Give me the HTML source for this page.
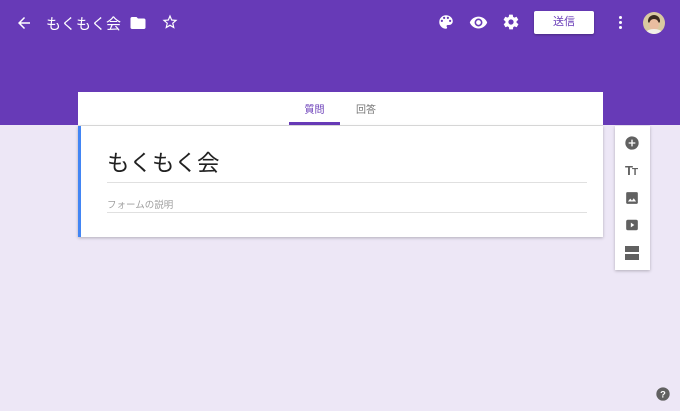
<!DOCTYPE html><html><head><meta charset="utf-8"><style>
body{margin:0;width:680px;height:411px;background:#ede7f6;font-family:"Liberation Sans","Noto Sans CJK JP",sans-serif;position:relative;overflow:hidden}
.hd{position:absolute;left:0;top:0;width:680px;height:125px;background:#673ab7}
.a{position:absolute}
</style></head><body>
<div class="hd"></div>
<svg class="a" style="left:15px;top:14px" width="18" height="18" viewBox="0 0 24 24"><path d="M20 11H7.8l5.6-5.6L12 4l-8 8 8 8 1.4-1.4L7.8 13H20z" fill="#fff"/></svg>
<div class="a" style="left:46px;top:13px;color:#fff;font-size:15px">もくもく会</div>
<svg class="a" style="left:129px;top:14px" width="18" height="18" viewBox="0 0 24 24"><path d="M10 4H4c-1.1 0-2 .9-2 2v12c0 1.1.9 2 2 2h16c1.1 0 2-.9 2-2V8c0-1.1-.9-2-2-2h-8z" fill="#fff"/></svg>
<svg class="a" style="left:161px;top:13px" width="18" height="18" viewBox="0 0 24 24"><path d="M22 9.2l-7.2-.6L12 2 9.2 8.6 2 9.2l5.5 4.7L5.8 21 12 17.3 18.2 21l-1.6-7.1zM12 15.4l-3.8 2.3 1-4.3-3.3-2.9 4.4-.4L12 6.1l1.7 4 4.4.4-3.3 2.9 1 4.3z" fill="#fff"/></svg>
<svg class="a" style="left:437px;top:13px" width="18" height="18" viewBox="0 0 24 24"><path d="M12 3a9 9 0 000 18c.8 0 1.5-.7 1.5-1.5 0-.4-.1-.7-.4-1-.2-.3-.4-.6-.4-1 0-.8.7-1.5 1.5-1.5H16c2.8 0 5-2.2 5-5C21 6.6 17 3 12 3zm-5.5 9a1.5 1.5 0 110-3 1.5 1.5 0 010 3zm3-4a1.5 1.5 0 110-3 1.5 1.5 0 010 3zm5 0a1.5 1.5 0 110-3 1.5 1.5 0 010 3zm3 4a1.5 1.5 0 110-3 1.5 1.5 0 010 3z" fill="#fff"/></svg>
<svg class="a" style="left:469px;top:13px" width="19" height="19" viewBox="0 0 24 24"><path d="M12 4.5C7 4.5 2.7 7.6 1 12c1.7 4.4 6 7.5 11 7.5s9.3-3.1 11-7.5c-1.7-4.4-6-7.5-11-7.5zM12 17a5 5 0 110-10 5 5 0 010 10zm0-8a3 3 0 100 6 3 3 0 000-6z" fill="#fff"/></svg>
<svg class="a" style="left:502px;top:13px" width="18" height="18" viewBox="0 0 24 24"><path d="M19.4 13c0-.3.1-.6.1-1s0-.7-.1-1l2.1-1.6c.2-.2.2-.4.1-.6l-2-3.5c-.1-.2-.4-.3-.6-.2l-2.5 1c-.5-.4-1.1-.7-1.7-1l-.4-2.6c0-.3-.2-.4-.5-.4h-4c-.3 0-.5.2-.5.4l-.4 2.6c-.6.3-1.2.6-1.7 1l-2.5-1c-.2-.1-.5 0-.6.2l-2 3.5c-.1.2-.1.5.1.6L4.6 11c0 .3-.1.7-.1 1s0 .7.1 1l-2.1 1.6c-.2.2-.2.4-.1.6l2 3.5c.1.2.4.3.6.2l2.5-1c.5.4 1.1.7 1.7 1l.4 2.6c0 .3.2.4.5.4h4c.3 0 .5-.2.5-.4l.4-2.6c.6-.3 1.200-.6 1.7-1l2.5 1c.2.1.5 0 .6-.2l2-3.5c.1-.2.1-.5-.1-.6zM12 15.5a3.5 3.5 0 110-7 3.5 3.5 0 010 7z" fill="#fff"/></svg>
<div class="a" style="left:534px;top:11px;width:60px;height:23px;background:#fff;border-radius:2px;box-shadow:0 1px 2px rgba(0,0,0,.3);color:#673ab7;font-size:11px;text-align:center;line-height:23px">送信</div>
<div class="a" style="left:619px;top:16px;width:3px;height:3px;background:#fff;border-radius:50%;box-shadow:0 5px 0 #fff,0 10px 0 #fff"></div>
<div class="a" style="left:643px;top:12px;width:22px;height:22px;border-radius:50%;overflow:hidden;background:#d9c9a0">
<div class="a" style="left:5px;top:3px;width:12px;height:8px;border-radius:6px 6px 2px 2px;background:#3a2a20"></div>
<div class="a" style="left:6px;top:7px;width:10px;height:11px;border-radius:50%;background:#e9bda0"></div>
<div class="a" style="left:3px;top:17px;width:16px;height:8px;border-radius:50%;background:#f2efe8"></div></div>
<div class="a" style="left:78px;top:92px;width:525px;height:33px;background:#fff;border-bottom:1px solid #e0e0e0"></div>
<div class="a" style="left:289px;top:101px;width:51px;text-align:center;font-size:10px;color:#673ab7">質問</div>
<div class="a" style="left:289px;top:122px;width:51px;height:3px;background:#673ab7"></div>
<div class="a" style="left:346px;top:101px;width:40px;text-align:center;font-size:10px;color:#757575">回答</div>
<div class="a" style="left:78px;top:126px;width:525px;height:111px;background:#fff;box-shadow:0 1px 3px rgba(0,0,0,.25)"></div>
<div class="a" style="left:78px;top:126px;width:3px;height:111px;background:#4285f4"></div>
<div class="a" style="left:107px;top:146px;font-size:22.5px;color:#212121">もくもく会</div>
<div class="a" style="left:107px;top:182px;width:480px;height:1px;background:#e0e0e0"></div>
<div class="a" style="left:107px;top:197px;font-size:9.5px;color:#9e9e9e">フォームの説明</div>
<div class="a" style="left:107px;top:212px;width:480px;height:1px;background:#e0e0e0"></div>
<div class="a" style="left:615px;top:126px;width:35px;height:144px;background:#fff;box-shadow:0 1px 3px rgba(0,0,0,.25)"></div>
<svg class="a" style="left:624px;top:135px" width="16" height="16" viewBox="0 0 24 24"><circle cx="12" cy="12" r="10" fill="#616161"/><path d="M11 7h2v4h4v2h-4v4h-2v-4H7v-2h4z" fill="#fff"/></svg>
<div class="a" style="left:625px;top:163px;font-size:13px;font-weight:bold;color:#616161;letter-spacing:-1px">T<span style="font-size:10px">T</span></div>
<svg class="a" style="left:625px;top:191px" width="14" height="14" viewBox="0 0 24 24"><rect x="2" y="2" width="20" height="20" rx="2" fill="#616161"/><path d="M5 18l4-5 3 3.5 3-4 4 5.5z" fill="#fff"/></svg>
<svg class="a" style="left:625px;top:218px" width="14" height="14" viewBox="0 0 24 24"><rect x="2" y="3" width="20" height="18" rx="3" fill="#616161"/><path d="M10 8v8l6-4z" fill="#fff"/></svg>
<div class="a" style="left:625px;top:246px;width:14px;height:6px;background:#616161"></div>
<div class="a" style="left:625px;top:254px;width:14px;height:6px;background:#616161"></div>
<svg class="a" style="left:655px;top:386px" width="16" height="16" viewBox="0 0 24 24"><circle cx="12" cy="12" r="10" fill="#616161"/><text x="12" y="17" text-anchor="middle" font-size="14" font-weight="bold" fill="#fff" font-family="Liberation Sans">?</text></svg>
</body></html>
